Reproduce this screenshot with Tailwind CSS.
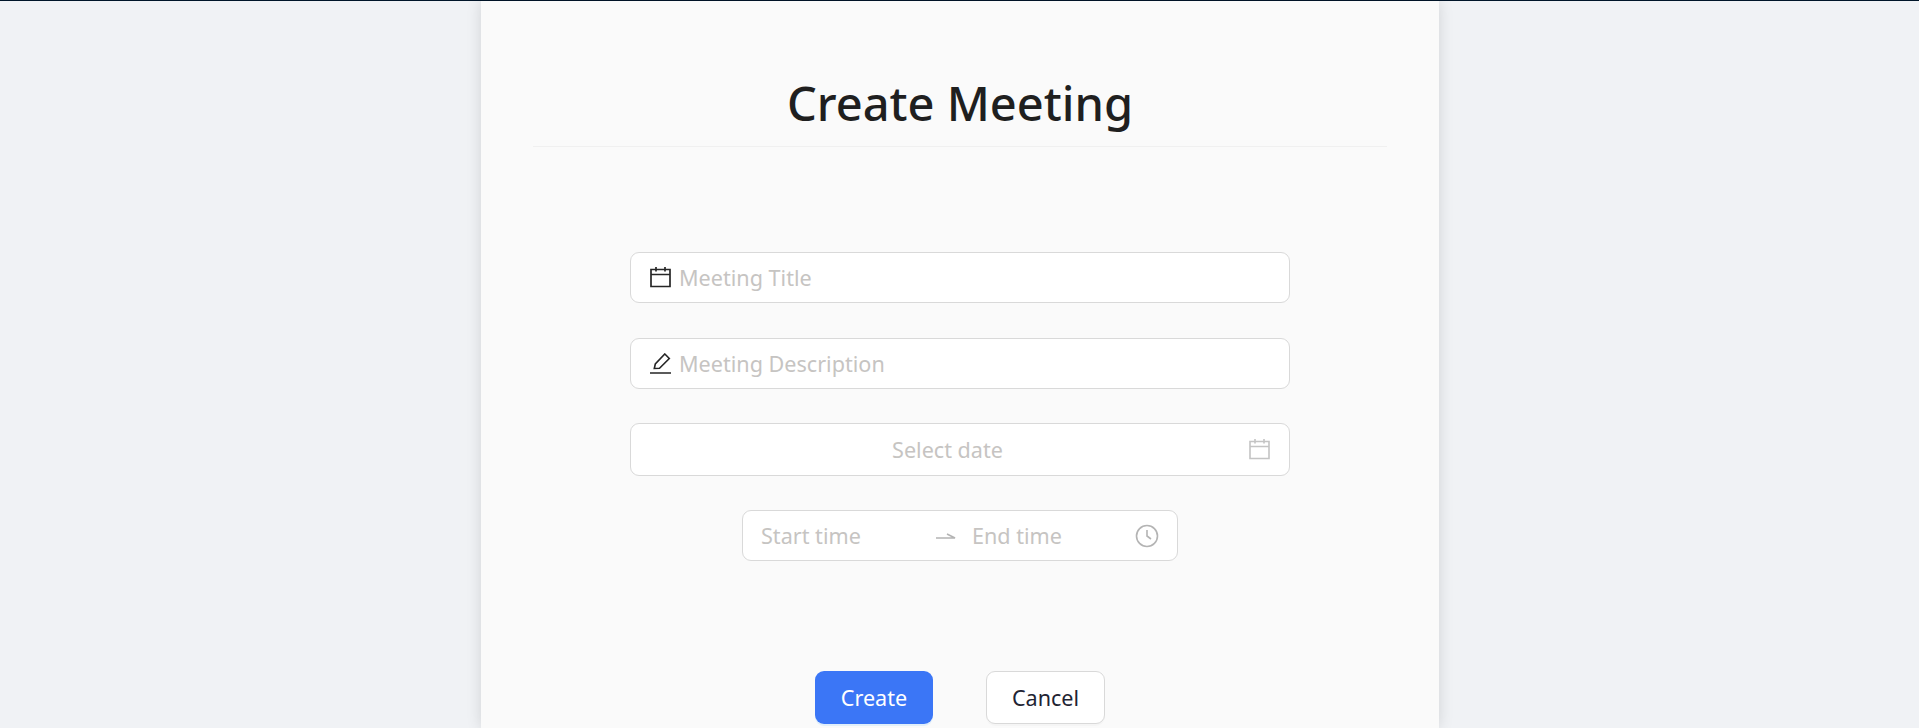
<!DOCTYPE html>
<html><head><meta charset="utf-8"><script src="https://cdn.jsdelivr.net/npm/@tailwindcss/browser@4"></script></head>
<body class="h-[728px] overflow-hidden bg-[#f0f2f5] font-['Noto_Sans','Open_Sans',sans-serif]">
<div class="h-px bg-[#001529]"></div>
<main class="w-[958px] h-[727px] ml-[481px] bg-[#fafafa] shadow-[0_0_14px_rgba(0,0,0,0.13)] px-[52px] overflow-hidden">
<h1 class="h-[146px] pt-[72px] text-center text-[47px] leading-[60px] font-medium text-[#1f1f1f] border-b border-[#f0f0f0]">Create Meeting</h1>
<div class="mt-[105px] flex flex-col items-center text-[21.6px]">
<div class="w-[660px] h-[51px] flex items-center gap-[8px] pl-[19px] pr-[19px] bg-white border border-[#d9d9d9] rounded-[9px]"><svg class="w-[21px] h-[22px] -mt-[1px]" viewBox="0 0 21 22" fill="none" stroke="#262626" stroke-width="1.7"><path d="M1 3.500h19v17H1zM1 8.500h19M6 1v4.500M15 1v4.500"/></svg><span class="text-[#c6c4c2] pt-[2px]">Meeting Title</span></div>
<div class="mt-[35px] w-[660px] h-[51px] flex items-center gap-[8px] pl-[19px] pr-[19px] bg-white border border-[#d9d9d9] rounded-[9px]"><svg class="w-[21px] h-[22px]" viewBox="0 0 21 22" fill="none" stroke="#262626" stroke-width="1.6"><path d="M0 20h21M4.300 15.500l1-4.500 9.500-10 4.500 4.500-9.800 9.800z"/></svg><span class="text-[#c6c4c2] pt-[2px]">Meeting Description</span></div>
<div class="mt-[34px] w-[660px] h-[53px] flex items-center pl-[19px] pr-[19px] bg-white border border-[#d9d9d9] rounded-[9px]"><span class="flex-1 text-center text-[#c6c4c2] pr-[4px] pt-[2px]">Select date</span><svg class="w-[21px] h-[22px] -mt-[2px]" viewBox="0 0 21 22" fill="none" stroke="#c4c4c4" stroke-width="1.6"><path d="M1 3.500h19v17H1zM1 8.500h19M6 1v4.500M15 1v4.500"/></svg></div>
<div class="mt-[34px] w-[436px] h-[51px] flex items-center px-[18px] bg-white border border-[#d9d9d9] rounded-[9px] text-[#c6c4c2]"><span class="w-[175px] pt-[2px]">Start time</span><svg class="w-[20px] h-[10px] mr-[16px]" viewBox="0 0 20 10" fill="none" stroke="#b4b4b4" stroke-width="1.6"><path d="M0 7h19L11 3"/></svg><span class="flex-1 pt-[2px]">End time</span><svg class="w-[24px] h-[24px]" viewBox="0 0 24 24" fill="none" stroke="#b4b4b4" stroke-width="1.6"><circle cx="12" cy="12" r="10.500"/><path d="M12 6v6l4 3"/></svg></div>
</div>
<div class="mt-[110px] flex justify-center gap-[53px] text-[21.6px]"><button class="w-[118px] h-[53px] pt-[2px] rounded-[9px] bg-[#3b76f6] text-white shadow-[0_2px_0_rgba(5,145,255,0.1)]">Create</button><button class="w-[119px] h-[53px] pt-[2px] rounded-[9px] bg-white border border-[#d9d9d9] text-[#1f2433] shadow-[0_2px_0_rgba(0,0,0,0.02)]">Cancel</button></div>
</main>
</body></html>
